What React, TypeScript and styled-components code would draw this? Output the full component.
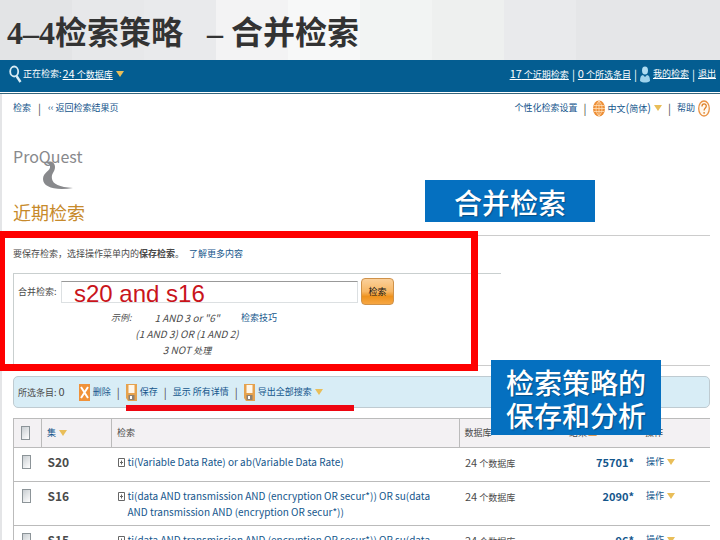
import React from "react";
import styled, { createGlobalStyle } from "styled-components";

const GlobalStyle = createGlobalStyle`
  *, *::before, *::after { box-sizing: border-box; }
  body {
    margin: 0;
    background: #e4e5e7;
    color: #4a4a4a;
    font-family: "Noto Sans CJK SC", sans-serif;
    font-size: 9px;
    line-height: 16px;
  }
  a { color: #14568c; text-decoration: none; }
  button, input { font: inherit; }
`;

const Slide = styled.div`
  position: relative;
  height: 100vh;
  overflow: hidden;
`;

const SlideTitle = styled.h1`
  display: flex;
  align-items: center;
  height: 60px;
  margin: 0;
  padding: 6px 7px 0;
  color: #333;
  background: linear-gradient(90deg, #e3e4e6 0 10%, #e7e8ea 10% 20%, #e9eaec 20% 30%, #f3f3f4 30% 40%, #f7f8f8 40% 50%, #f2f4f3 50% 60%, #eef0ef 60% 70%, #e9eaec 70% 80%, #e5e6e8 80% 100%);
  font: bold 32px/48px "Liberation Serif", "Noto Sans CJK SC", serif;
  white-space: pre;
`;

const Dash = styled.span`
  margin: 0 8px 0 24px;
`;

const TopBar = styled.nav`
  display: flex;
  justify-content: space-between;
  height: 34px;
  padding: 6px 4px 0 9px;
  color: #fff;
  background: #045d91;
  border-bottom: 1px solid #35657b;
  box-shadow: inset 0 -1px #fff;
  a, button { color: #fff; text-decoration: underline; }
`;

const Group = styled.div<{ $gap?: number }>`
  display: flex;
  align-items: center;
  height: 16px;
  gap: ${(p) => p.$gap ?? 3}px;
  white-space: nowrap;
`;

const Num = styled.span`
  font-size: 11px;
`;

const Separator = styled.span`
  font-size: 11px;
`;

const MenuButton = styled.button`
  display: inline-flex;
  align-items: center;
  gap: 3px;
  padding: 0;
  border: 0;
  background: none;
  color: #14568c;
  line-height: 16px;
  vertical-align: top;
  white-space: nowrap;
  cursor: pointer;
`;

const Sheet = styled.main`
  min-height: 100%;
  margin-left: 2px;
  padding: 0 10px 0 11px;
  background: #fff;
`;

const SubNav = styled.nav`
  display: flex;
  justify-content: space-between;
  height: 50px;
  padding-top: 6px;
`;

const Brand = styled.div`
  height: 54px;
`;

const PageTitle = styled.h2`
  height: 37px;
  margin: 0;
  color: #c78a2b;
  font-size: 18px;
  font-weight: 400;
  line-height: 28px;
`;

const SearchArea = styled.section`
  position: relative;
  height: 131px;
  border: solid #ccc;
  border-width: 1px 0;
`;

const Message = styled.p`
  display: flex;
  gap: 5px;
  height: 37px;
  margin: 0;
  padding-top: 10px;
`;

const CombineForm = styled.form`
  display: grid;
  grid-template-columns: 47px 297px 36px;
  align-items: center;
  align-content: start;
  width: 70%;
  height: 92px;
  padding-top: 4px;
  border: solid #c9cfcf;
  border-width: 1px 0 0 1px;
`;

const FieldLabel = styled.label`
  padding-left: 4px;
  white-space: nowrap;
`;

const QueryInput = styled.input`
  height: 22px;
  padding: 4px 0 0 12px;
  border: 1px solid #dce0e2;
  border-top-color: #999;
  border-radius: 0;
  outline: 0;
  color: #c9141b;
  font: 24px/16px "Liberation Sans", sans-serif;
`;

const SearchButton = styled.button`
  height: 27px;
  margin-left: 3px;
  padding: 0;
  border: 1px solid #cf924a;
  border-radius: 4px;
  background: linear-gradient(#fbd09a, #f7b765 50%, #ee921e 70%, #f7a743);
  color: #111;
  cursor: pointer;
`;

const Examples = styled.div`
  grid-column: 1 / -1;
  display: grid;
  grid-template-columns: 22px 104px 1fr;
  column-gap: 2px;
  padding: 5px 0 0 97px;
  white-space: nowrap;
`;

const ExampleLines = styled.em`
  font-size: 10px;
  text-align: center;
`;

const Small = styled.span`
  font-size: 9px;
`;

const Frame = styled.div`
  position: absolute;
  top: -5px;
  left: -15px;
  width: 480px;
  height: 140px;
  border: 7px solid #fe0000;
`;

const Toolbar = styled.div`
  display: flex;
  align-items: center;
  position: relative;
  height: 32px;
  margin: 10px 0;
  padding-left: 4px;
  background: #d8edf6;
  border: 1px solid #bfcbd1;
  border-radius: 5px;
`;

const Actions = styled.div`
  display: flex;
  align-items: center;
  gap: 6px;
  margin-left: 14px;
`;

const Underline = styled.div`
  position: absolute;
  top: 28px;
  left: 112px;
  width: 228px;
  height: 6px;
  background: #ee0510;
`;

const Results = styled.table`
  width: 100%;
  table-layout: fixed;
  border-collapse: collapse;
  border-left: 1px solid #bbb;
  th {
    height: 28px;
    padding: 6px 5px;
    border: 1px solid #bbb;
    border-width: 1px 0 1px 1px;
    background: #f3f1f3;
    font-weight: 400;
    text-align: left;
    vertical-align: top;
    white-space: nowrap;
  }
  th:nth-child(n + 5) { border-left: 0; }
  th:nth-child(5) { padding-left: 20px; }
  td {
    height: 34px;
    padding: 6px 6px 5px;
    border-bottom: 1px solid #bbb;
    line-height: 16px;
    vertical-align: top;
    white-space: nowrap;
  }
  td:nth-child(3) { padding-right: 24px; }
`;

const Col = styled.col<{ $w?: number }>`
  width: ${(p) => (p.$w ? `${p.$w}px` : "auto")};
`;

const Tick = styled.input`
  appearance: none;
  display: block;
  width: 9px;
  height: 14px;
  margin: 1px 0 0 2px;
  border: 1px solid #8c9498;
  background: linear-gradient(135deg, #c9ced2, #fff);
`;

const SetName = styled.strong`
  display: block;
  font-size: 12px;
`;

const Query = styled.div`
  display: flex;
  gap: 3px;
  font-size: 10px;
  svg { flex: none; margin-top: 4px; }
  a { white-space: normal; }
`;

const Count = styled.a`
  display: block;
  font-size: 11px;
  font-weight: bold;
  text-align: right;
`;

const Callout = styled.aside<{ $top: number; $right: number }>`
  position: absolute;
  top: ${(p) => p.$top}px;
  right: ${(p) => p.$right}px;
  width: 170px;
  padding: 6px 0 3px;
  background: #0570c0;
  color: #fff;
  font: 500 28px/33px "Noto Sans CJK SC", sans-serif;
  text-align: center;
  text-shadow: 1px 1px 1px #064f88;
`;

const Caret = ({ color = "#e9be59" }: { color?: string }) => (
  <svg width="8" height="6" viewBox="0 0 8 6" aria-hidden="true"><path d="M0 0h8L4 6z" fill={color} /></svg>
);
const UpCaret = () => (
  <svg width="9" height="6" viewBox="0 0 9 6" aria-hidden="true"><path d="M4.500 0L9 6H0z" fill="#df9b57" /></svg>
);
const Magnifier = () => (
  <svg width="13" height="18" viewBox="0 0 13 18" aria-hidden="true">
    <ellipse cx="5.200" cy="6.500" rx="4" ry="5" fill="none" stroke="#d8ecf5" strokeWidth="1.800" />
    <path d="M7.500 11l4 6" stroke="#d8ecf5" strokeWidth="2.400" />
  </svg>
);
const Person = () => (
  <svg width="10" height="17" viewBox="0 0 10 17" aria-hidden="true">
    <ellipse cx="5" cy="4.500" rx="3" ry="4" fill="#aedcf2" />
    <path d="M0 15C0 11 1 9 3 9L5 11L7 9C9 9 10 11 10 15C7 17 3 17 0 15Z" fill="#9ed2ec" />
  </svg>
);
const Globe = () => (
  <svg width="12" height="17" viewBox="0 0 12 17" aria-hidden="true">
    <ellipse cx="6" cy="8.500" rx="6" ry="8" fill="#ed8e36" />
    <path d="M1 5.500h10M0 8.500h12M1 11.500h10M6 1v15M6 1C2 5 2 12 6 16M6 1c4 4 4 11 0 15" fill="none" stroke="#ffdfb8" strokeWidth=".8" />
  </svg>
);
const Help = () => (
  <svg width="12" height="17" viewBox="0 0 12 17" aria-hidden="true">
    <ellipse cx="6" cy="8.500" rx="5.300" ry="7.500" fill="#fff8ee" stroke="#e99243" strokeWidth="1.300" />
    <path d="M4 6.500c0-3.500 4.300-3.300 4.300-.5 0 2-2.200 2-2.200 4.500M6.100 12v1.700" fill="none" stroke="#df8129" strokeWidth="1.300" />
  </svg>
);
const DeleteIcon = () => (
  <svg width="11" height="17" viewBox="0 0 11 17" aria-hidden="true">
    <path d="M0 0h11v17H0z" fill="#f0923a" />
    <path d="M2 3l7 11M9 3L2 14" stroke="#fff" strokeWidth="2" />
  </svg>
);
const SaveIcon = () => (
  <svg width="11" height="17" viewBox="0 0 11 17" aria-hidden="true">
    <path d="M0 0h11v17H2l-2-3z" fill="#e5a24e" />
    <path d="M2.500 1h6v8h-6z" fill="#fff6e8" />
    <path d="M2.500 11h6v5h-6z" fill="#8c8174" />
    <path d="M4 12h2v3H4z" fill="#fff" />
  </svg>
);
const PlusBox = () => (
  <svg width="7" height="9" viewBox="0 0 7 9" aria-hidden="true">
    <path d="M.5.5h6v8h-6zM2 4.500h3M3.500 2.500v4" fill="none" stroke="#666" />
  </svg>
);
const Logo = () => (
  <svg width="80" height="48" viewBox="0 0 80 48" role="img" aria-label="ProQuest">
    <text x="0" y="19" fill="#88898c" fontSize="16" fontFamily='"Noto Sans CJK SC", sans-serif'>ProQuest</text>
    <path d="M32 19C37 16 42 18 42 23C42 28 38 29 39 35C40 40 46 43 60 44C42 47 30 43 30 35C30 28 38 27 37 22C36 20 35 19 32 19Z" fill="#88898c" />
  </svg>
);

const Bar = () => <Separator>|</Separator>;

const rows = [
  { id: "S20", query: "ti(Variable Data Rate) or ab(Variable Data Rate)", count: "75701*" },
  { id: "S16", query: "ti(data AND transmission AND (encryption OR secur*)) OR su(data AND transmission AND (encryption OR secur*))", count: "2090*" },
  { id: "S15", query: "ti(data AND transmission AND (encryption OR secur*)) OR su(data AND transmission AND (encryption OR secur*))", count: "96*" },
];

export default function App() {
  return (
    <Slide>
      <GlobalStyle />
      <SlideTitle>4–4检索策略<Dash>–</Dash>合并检索</SlideTitle>
      <TopBar>
        <Group $gap={1}>
          <Magnifier /><span>正在检索:</span>
          <MenuButton><span><Num>24</Num> 个数据库</span><Caret /></MenuButton>
        </Group>
        <Group>
          <a href="#recent"><Num>17</Num> 个近期检索</a><Bar />
          <a href="#selected"><Num>0</Num> 个所选条目</a><Bar />
          <Person /><a href="#mine">我的检索</a><Bar /><a href="#exit">退出</a>
        </Group>
      </TopBar>
      <Sheet>
        <SubNav>
          <Group $gap={7}><a href="#search">检索</a><Bar /><a href="#results">‹‹ 返回检索结果页</a></Group>
          <Group $gap={6}>
            <a href="#prefs">个性化检索设置</a><Bar />
            <MenuButton><Globe /><span>中文<Num>(</Num>简体<Num>)</Num></span><Caret /></MenuButton><Bar />
            <MenuButton>帮助<Help /></MenuButton>
          </Group>
        </SubNav>
        <Brand><Logo /></Brand>
        <PageTitle>近期检索</PageTitle>
        <SearchArea>
          <Message><span>要保存检索，选择操作菜单内的<b>保存检索</b>。</span><a href="#more">了解更多内容</a></Message>
          <CombineForm onSubmit={(e) => e.preventDefault()}>
            <FieldLabel htmlFor="combine">合并检索:</FieldLabel>
            <QueryInput id="combine" defaultValue="s20 and s16" />
            <SearchButton type="submit">检索</SearchButton>
            <Examples>
              <em>示例:</em>
              <ExampleLines>1 AND 3 or "6"<br />(1 AND 3) OR (1 AND 2)<br />3 NOT <Small>处理</Small></ExampleLines>
              <a href="#tips">检索技巧</a>
            </Examples>
          </CombineForm>
          <Frame />
        </SearchArea>
        <Toolbar>
          <span>所选条目: <Num>0</Num></span>
          <Actions>
            <MenuButton><DeleteIcon />删除</MenuButton><Bar />
            <MenuButton><SaveIcon />保存</MenuButton><Bar />
            <MenuButton>显示 所有详情</MenuButton><Bar />
            <MenuButton><SaveIcon />导出全部搜索<Caret /></MenuButton>
          </Actions>
          <Underline />
        </Toolbar>
        <Results>
          <colgroup><Col $w={28} /><Col $w={70} /><Col /><Col $w={90} /><Col $w={91} /><Col $w={70} /></colgroup>
          <thead>
            <tr>
              <th><Tick type="checkbox" aria-label="全选" /></th>
              <th><MenuButton>集<Caret /></MenuButton></th>
              <th>检索</th>
              <th>数据库</th>
              <th><Group $gap={1}>结果<UpCaret /></Group></th>
              <th>操作</th>
            </tr>
          </thead>
          <tbody>
            {rows.map((r) => (
              <tr key={r.id}>
                <td><Tick type="checkbox" aria-label={r.id} /></td>
                <td><SetName>{r.id}</SetName></td>
                <td><Query><PlusBox /><a href={"#" + r.id}>{r.query}</a></Query></td>
                <td><Num>24</Num> 个数据库</td>
                <td><Count href={"#" + r.id}>{r.count}</Count></td>
                <td><MenuButton>操作<Caret /></MenuButton></td>
              </tr>
            ))}
          </tbody>
        </Results>
      </Sheet>
      <Callout $top={180} $right={125}>合并检索</Callout>
      <Callout $top={360} $right={59}>检索策略的<br />保存和分析</Callout>
    </Slide>
  );
}
